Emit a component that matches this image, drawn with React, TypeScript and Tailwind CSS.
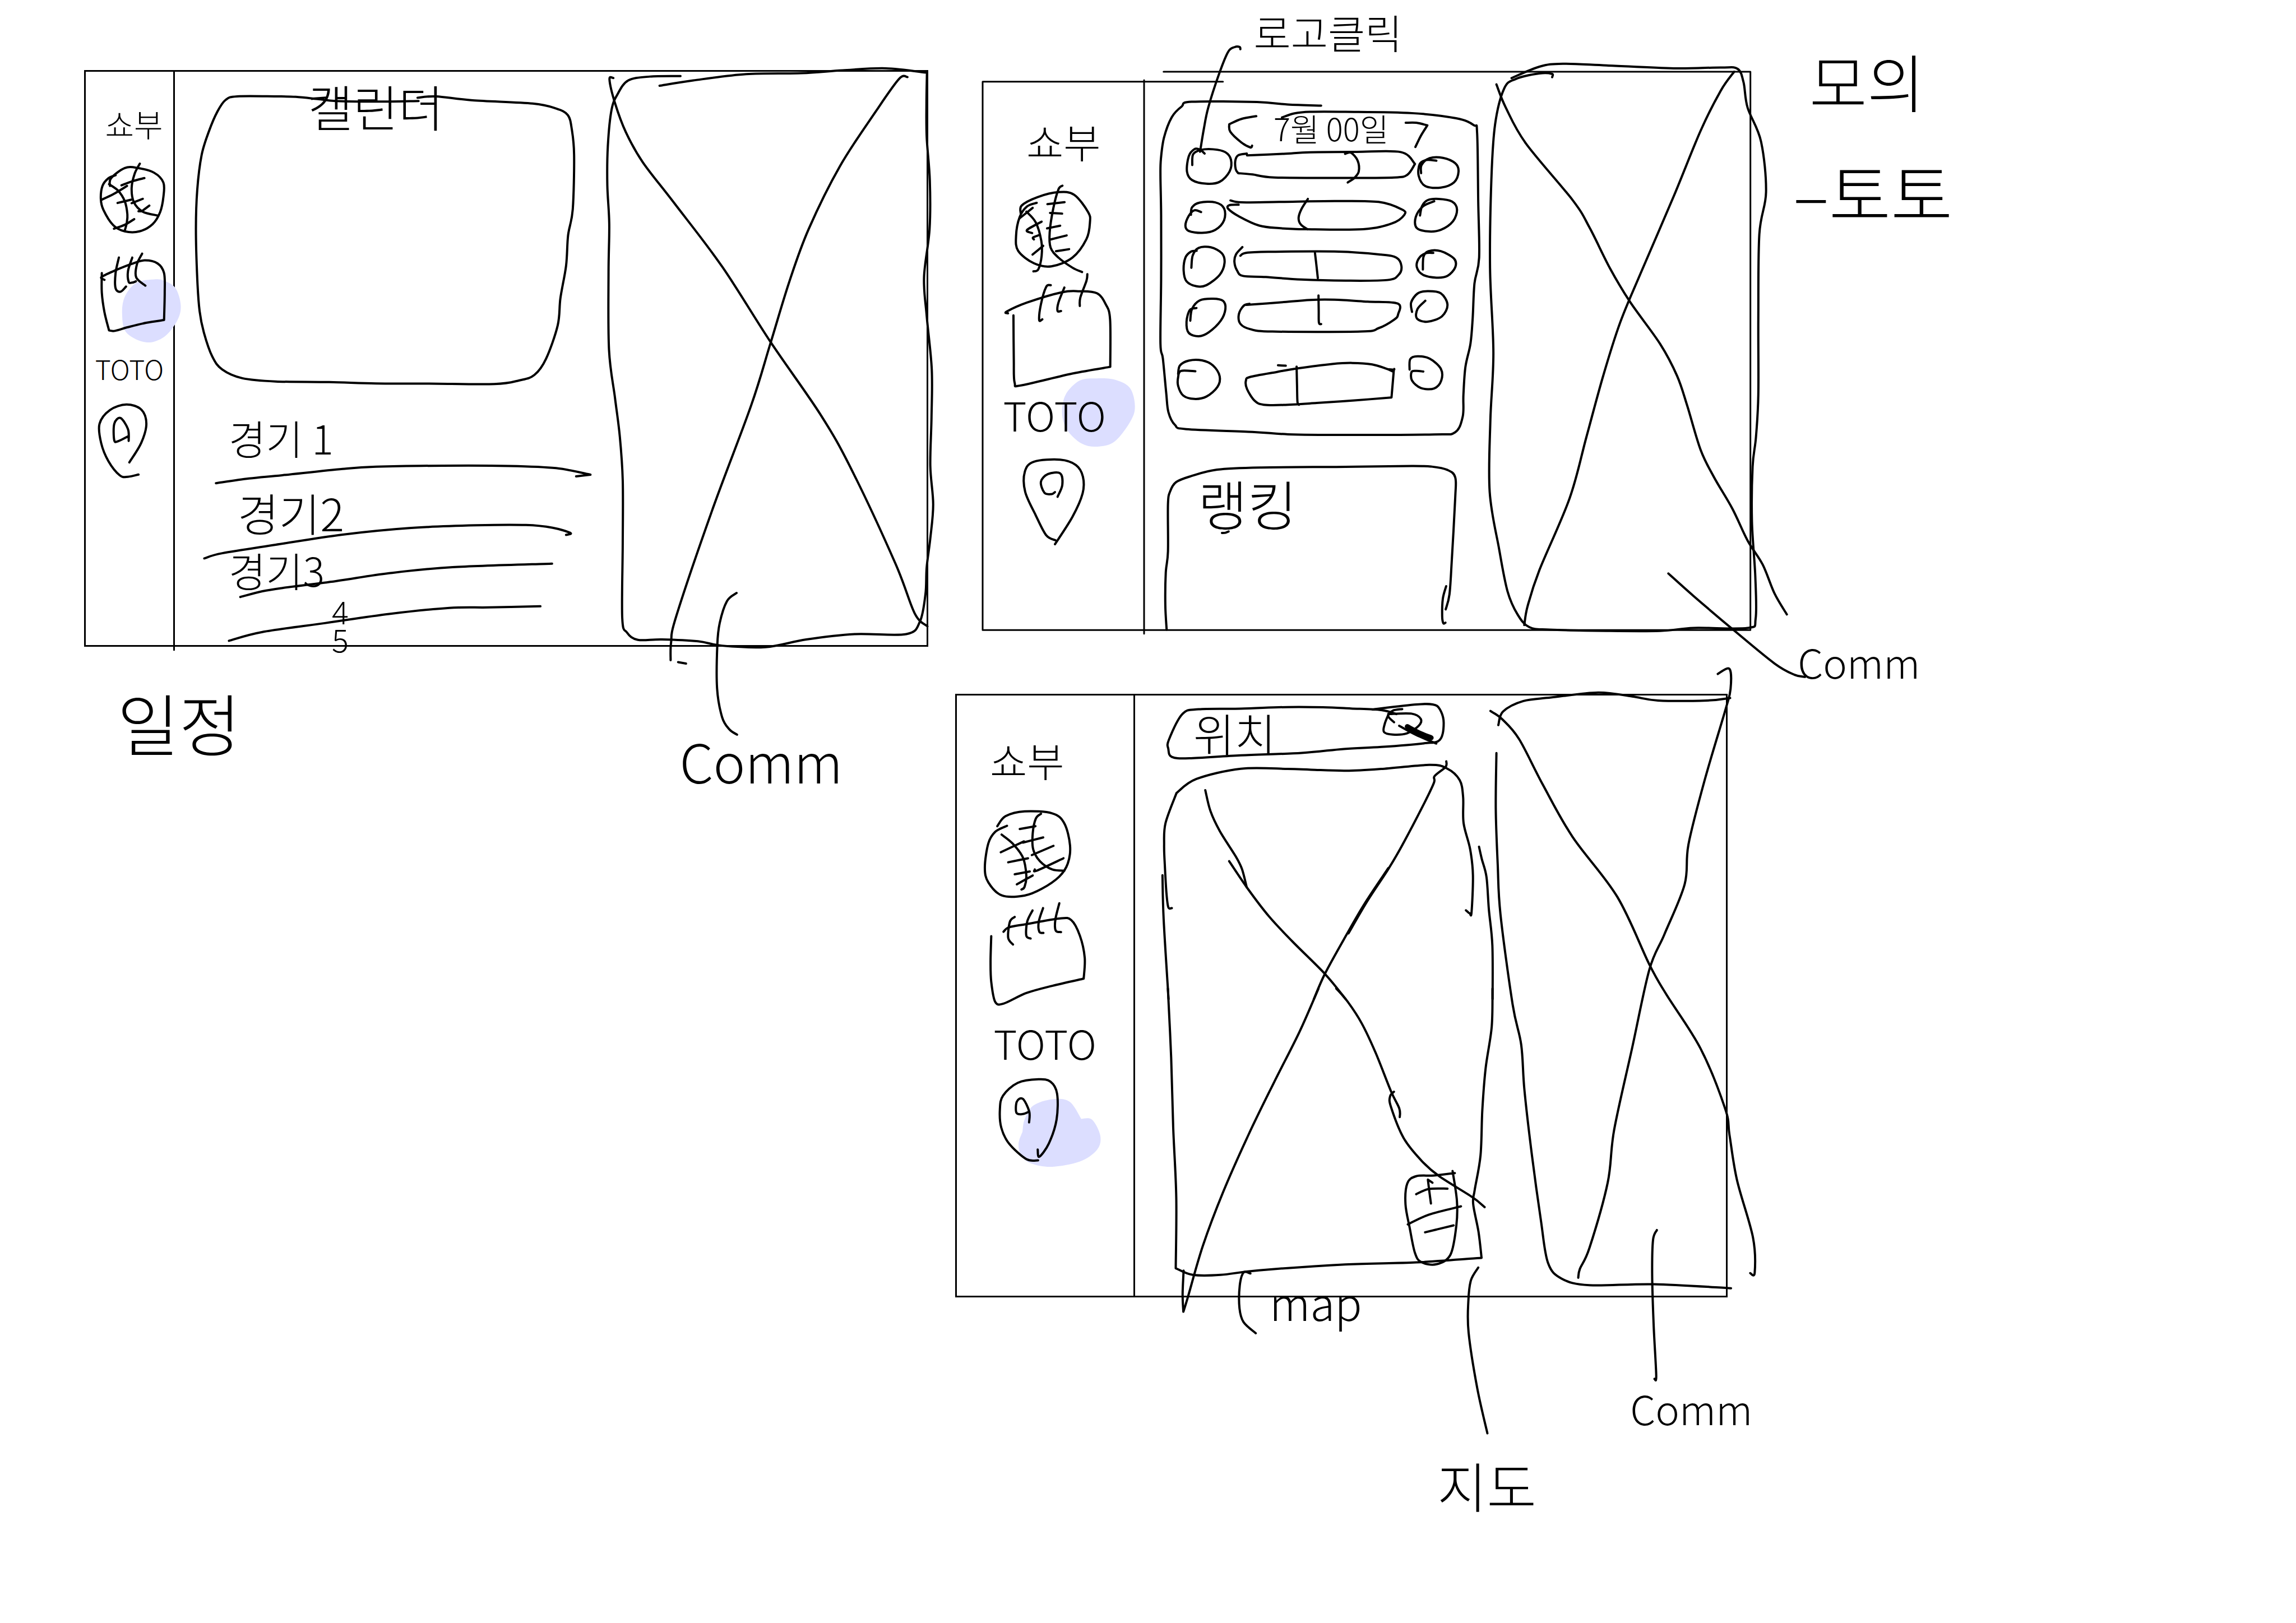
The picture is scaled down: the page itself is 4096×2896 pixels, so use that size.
import type { ReactNode } from 'react';

/* Turns a list of "x,y" points into a smooth pen stroke; a repeated point makes a corner. */
function pen(points: string, closed = false): string {
  const p = points.trim().split(/\s+/).map((s) => s.split(',').map(Number));
  const n = p.length;
  const at = (i: number) => (closed ? p[(i + n) % n] : p[Math.max(0, Math.min(n - 1, i))]);
  let d = `M${p[0][0]} ${p[0][1]}`;
  for (let i = 0; i < (closed ? n : n - 1); i++) {
    const [a, b, c, e] = [at(i - 1), at(i), at(i + 1), at(i + 2)];
    if (b[0] === c[0] && b[1] === c[1]) continue;
    d += `C${b[0] + (c[0] - a[0]) / 6} ${b[1] + (c[1] - a[1]) / 6} ${c[0] - (e[0] - b[0]) / 6} ${c[1] - (e[1] - b[1]) / 6} ${c[0]} ${c[1]}`;
  }
  return d;
}

type InkProps = { box: string; strokes?: string[]; blob?: string; bold?: string; width?: number };

/* Pen drawing that fills its parent; strokes may run past the edges. */
function Ink({ box, strokes = [], blob, bold, width = 4 }: InkProps) {
  return (
    <svg
      className="pointer-events-none absolute inset-0 h-full w-full overflow-visible"
      viewBox={box}
      preserveAspectRatio="none"
      fill="none"
      stroke="black"
      strokeLinecap="round"
      strokeLinejoin="round"
      strokeWidth={width}
      aria-hidden="true"
    >
      {blob && <path d={pen(blob, true)} fill="#dcdeff" stroke="none" />}
      {strokes.map((s) => (
        <path key={s} d={pen(s)} vectorEffect="non-scaling-stroke" />
      ))}
      {bold && <path d={pen(bold)} strokeWidth={9} vectorEffect="non-scaling-stroke" />}
    </svg>
  );
}

function NavButton({ label, size, children }: { label: string; size: string; children: ReactNode }) {
  return (
    <button type="button" aria-label={label} className={`relative flex w-full shrink-0 items-center justify-center leading-none ${size}`}>
      {children}
    </button>
  );
}

function Community({ size, ink }: { size: string; ink: InkProps }) {
  return (
    <aside aria-label="Comm" className={`relative h-full ${size}`}>
      <Ink {...ink} />
    </aside>
  );
}

/* ---------- 일정 ---------- */

const games = [
  { name: '경기 1', row: 'h-[30%] pl-24 text-[72px]' },
  { name: '경기2', row: 'h-[31%] pl-28 text-[80px]' },
  { name: '경기3', row: 'h-[16%] pl-24 text-[72px]' },
  { name: '4', row: 'h-[18%] pl-70 text-[56px]' },
  { name: '5', row: 'h-[5%] pl-70 text-[56px]' },
];

function ScheduleFrame() {
  return (
    <section aria-label="일정" className="absolute left-[3.66%] top-[4.31%] flex h-[35.54%] w-[36.78%] border-3 border-black">
      <nav className="flex h-[101%] w-[10.6%] flex-col border-r-3 border-black">
        <a href="#home" className="flex h-[15.2%] items-center justify-center pt-7 pl-4 text-[56px] leading-none">쇼부</a>
        <NavButton label="경기" size="h-[14.1%]">
          <Ink
            box="31 470 267 374"
            strokes={[
              '105,590 108,555 150,508 190,508 240,530 268,575 268,640 258,710 235,765 195,798 150,798 115,770 85,700 77,650 82,590 100,555 122,541',
              '102,582 130,612 150,660 158,720 156,760 150,795',
              '196,488 180,535 171,600 178,665 205,708 252,726',
              '140,587 175,568 210,554',
              '78,654 115,628 157,590',
              '128,668 170,653',
              '171,669 205,649',
              '192,706 203,704 225,680',
              '117,786 150,768 179,742',
            ]}
          />
        </NavButton>
        <NavButton label="일정" size="h-[17.1%]">
          <Ink
            box="31 844 267 458"
            blob="240,1019 185,1035 150,1100 142,1180 155,1265 215,1310 270,1285 310,1210 321,1140 305,1060 270,1025"
            strokes={[
              '88,1021 79,1008 120,978 170,948 210,931 250,945 270,990 272,1080 270,1207 270,1207 215,1220 160,1240 120,1257 102,1255 102,1255 88,1170 80,1080 80,990',
              '132,918 122,990 122,1060 137,1076 154,1052',
              '173,918 160,980 162,1030 172,1034 184,1028',
              '203,900 187,950 185,1010 213,1048',
            ]}
          />
        </NavButton>
        <NavButton label="TOTO" size="h-[9.6%] text-[48px]">TOTO</NavButton>
        <NavButton label="위치" size="h-[15%]">
          <Ink
            box="31 210 267 315"
            strokes={[
              '192,494 160,502 135,497 100,445 78,380 73,310 105,260 155,240 200,258 216,310 200,380 164,450',
              '162,372 160,330 137,289 118,310 118,370 130,373 161,355',
            ]}
          />
        </NavButton>
      </nav>
      <main className="flex h-full w-[50.4%] flex-col">
        <div className="relative h-[56.2%] pt-4 pr-10">
          <Ink
            box="298 55 1270 1488"
            strokes={[
              '1028,190 900,193 780,190 730,182 660,171 600,169 485,169 450,185 425,240 400,330 378,440 365,600 361,780 365,1010 372,1160 385,1260 410,1370 440,1430 500,1470 600,1485 760,1488 900,1494 1060,1495 1255,1497 1330,1480 1375,1455 1410,1380 1445,1225 1453,1100 1470,950 1476,810 1490,690 1494,440 1487,320 1475,255 1440,225 1370,202 1190,187 1080,169 1025,175',
            ]}
          />
          <h2 className="text-center text-[88px] leading-none">캘린더</h2>
        </div>
        <ol className="relative flex h-[43.8%] flex-col pt-3">
          <Ink
            box="298 191 1270 918"
            strokes={[
              '421,517 520,500 620,488 800,465 900,457 1100,453 1300,454 1440,462 1543,486 1543,486 1500,492',
              '386,792 440,773 600,742 800,705 1000,681 1200,671 1350,670 1430,680 1483,699 1470,706',
              '494,933 560,912 620,900 780,875 940,846 1130,824 1428,811',
              '460,1093 560,1061 750,1028 940,995 1120,973 1240,971 1393,967',
            ]}
          />
          {games.map((g) => (
            <li key={g.name} className={`flex shrink-0 items-center leading-none ${g.row}`}>{g.name}</li>
          ))}
        </ol>
      </main>
      <Community
        size="w-[39%]"
        ink={{
          box: '87 25 1363 1186',
          strokes: [
            '427,34 300,35 210,43 165,72 140,105 125,180 123,260 131,340 128,440 130,600 155,700 175,780 187,870 187,1000 185,1155 205,1185 250,1200 350,1199 500,1203 600,1212 780,1215 950,1199 1150,1188 1365,1188 1422,1162 1445,1105 1450,1050 1465,990 1477,920 1465,840 1470,740 1471,640 1450,530 1439,450 1462,350 1463,250 1450,160 1449,90 1451,30',
            '340,54 480,43 700,30 930,28 1100,22 1280,18 1451,27',
            '148,38 132,41 155,90 200,150 270,212 400,296 600,428 800,583 1010,735 1140,850 1320,1042 1400,1145 1453,1172',
            '1370,36 1335,40 1240,106 1090,220 960,350 880,458 800,588 720,716 560,930 410,1150 388,1205 386,1242',
            '417,1246 450,1249',
            '660,1103 620,1120 590,1165 580,1210 579,1300 600,1360 630,1385 662,1396',
          ],
        }}
      />
    </section>
  );
}

/* ---------- 모의 토토 ---------- */

const matches = [
  {
    row: 'h-[13.2%]',
    y: '670',
    h: '230',
    home: ['206,770 210,720 245,700 300,697 355,710 381,745 375,800 330,848 270,857 205,840 182,800 190,730 215,697 240,698 262,717'],
    odds: [
      '454,717 415,725 402,750 404,790 415,808 415,808 480,814 580,828 900,830 1120,828 1180,815 1214,765 1214,765 1150,710 950,709 740,711 620,718 455,725',
      '898,718 925,713 955,750 960,800 940,830 910,851',
    ],
    away: ['1241,808 1243,770 1280,738 1340,737 1395,762 1410,800 1390,850 1330,875 1260,868 1230,820 1235,765 1265,747 1310,750'],
  },
  {
    row: 'h-[12.6%]',
    y: '900',
    h: '220',
    home: ['200,1000 205,965 240,943 310,942 350,970 350,1025 310,1070 250,1084 190,1075 175,1050 190,1005 215,979 246,987'],
    odds: [
      '417,953 375,955 370,972 420,1008 510,1050 600,1062 720,1067 980,1067 1110,1040 1166,1000 1155,975 1050,940 850,936 600,940 430,942 380,933',
      '730,926 700,975 688,1015 698,1045 728,1067',
    ],
    away: ['1236,1003 1245,960 1270,932 1320,926 1380,938 1403,975 1385,1030 1330,1070 1270,1077 1220,1060 1217,1010 1250,960 1300,937'],
  },
  {
    row: 'h-[12.9%]',
    y: '1120',
    h: '225',
    home: ['202,1247 208,1190 235,1155 290,1152 340,1180 352,1225 330,1280 270,1328 225,1333 180,1310 167,1260 175,1200 200,1172 226,1168'],
    odds: [
      '434,1151 405,1185 398,1220 410,1260 437,1285 540,1290 700,1302 900,1307 1090,1304 1140,1280 1153,1240 1130,1200 1060,1186 870,1172 550,1173 450,1178 425,1191',
      '762,1178 768,1230 775,1295',
    ],
    away: ['1249,1255 1252,1195 1275,1170 1330,1170 1390,1205 1395,1245 1360,1285 1310,1293 1250,1280 1222,1245 1230,1205 1260,1180 1296,1178'],
  },
  {
    row: 'h-[14.8%]',
    y: '1345',
    h: '260',
    home: ['197,1495 205,1440 240,1400 300,1392 345,1402 356,1440 335,1495 280,1550 235,1568 190,1552 180,1500 195,1445 225,1436'],
    odds: [
      '466,1416 440,1425 418,1465 425,1510 470,1535 570,1546 970,1546 1050,1530 1120,1490 1138,1465 1136,1415 1000,1406 850,1397 740,1398 600,1410 452,1421',
      '778,1377 779,1450 780,1505 790,1511',
    ],
    away: ['1200,1454 1196,1410 1225,1368 1270,1357 1330,1367 1360,1420 1335,1475 1270,1500 1222,1485 1225,1440 1260,1402'],
  },
  {
    row: 'h-[18.9%]',
    y: '135',
    h: '331',
    home: ['220,262 155,260 142,290 142,330 165,375 215,391 270,380 320,335 330,285 300,235 250,211 190,212 150,235 142,275'],
    odds: [
      '1112,262 1085,250 1020,230 930,223 840,228 680,249 590,265 470,288 450,305 455,345 490,400 530,418 620,419 770,410 940,398 1108,384 1108,384 1118,262 1118,255 1090,252',
      '679,240 681,330 683,405 690,418',
      '595,234 630,236',
    ],
    away: ['1189,254 1192,205 1225,192 1280,203 1330,250 1332,305 1300,342 1240,340 1200,305 1198,265 1220,260 1251,263'],
  },
];

function TotoFrame() {
  return (
    <section aria-label="모의 토토" className="absolute left-[42.81%] top-[4.41%] flex h-[34.4%] w-[33.44%]">
      <Ink
        width={3}
        box="1869 136 1460 1062"
        strokes={[
          '2326,155 1869,155 1869,155 1869,1198 1869,1198 3329,1198 3329,1198 3329,136 3329,136 2213,136',
          '2176,152 2176,1205',
        ]}
      />
      <nav className="flex h-full w-[21%] flex-col">
        <a href="#home" className="flex h-[19.9%] items-center justify-center pt-14 pb-2 text-[72px] leading-none">쇼부</a>
        <NavButton label="경기" size="h-[16.3%]">
          <Ink
            box="87 372 921 271"
            strokes={[
              '305,465 310,440 400,415 520,400 610,408 690,460 700,490 680,540 600,595 480,621 380,612 290,575 278,530 298,475 340,443 396,432',
              '298,478 373,447',
              '337,458 390,490 422,545 424,590 405,630 377,636',
              '543,381 520,392 490,450 470,520 475,565 520,595 600,625 655,638',
              '457,436 555,430',
              '472,462 541,464',
              '455,508 530,500',
              '476,541 567,529',
              '506,576 581,570',
              '424,488 340,513 370,522',
              '410,528 375,535 380,541',
              '433,560 372,586',
            ]}
          />
        </NavButton>
        <NavButton label="일정" size="h-[20.5%]">
          <Ink
            box="87 643 921 342"
            strokes={[
              '232,762 224,757 340,730 540,699 640,696 740,702 790,735 815,780 816,922 816,922 600,942 310,977 270,970 265,900 263,768',
              '476,678 450,683 420,735 410,782 428,780',
              '554,685 520,730 515,755 535,755',
              '685,645 680,665 645,715 642,740',
            ]}
          />
        </NavButton>
        <NavButton label="TOTO" size="h-[10.5%] text-[72px]">
          <Ink
            box="87 985 921 176"
            blob="740,955 640,962 560,1005 541,1062 570,1110 650,1150 740,1160 840,1145 930,1085 957,1040 930,985 850,960"
          />
          <span className="relative pr-8 pb-3">TOTO</span>
        </NavButton>
        <NavButton label="위치" size="h-[18.8%]">
          <Ink
            box="87 1160 921 314"
            strokes={[
              '503,1440 450,1425 390,1365 330,1295 328,1235 380,1205 530,1199 620,1215 660,1250 658,1300 600,1370 500,1452',
              '515,1310 542,1275 530,1240 460,1242 420,1265 440,1298 480,1302 500,1296',
            ]}
          />
        </NavButton>
      </nav>
      <main className="flex h-full w-[44.1%] flex-col">
        <div className="relative flex h-[67.2%] flex-col">
          <Ink
            box="-10 333 1530 1749"
            strokes={[
              '790,491 640,486 500,474 205,473 160,495 115,545 80,640 66,740 64,820 67,1000 67,1300 64,1600 75,1670 90,1830 100,1920 130,1980 180,1999 480,2012 640,2023 900,2026 1300,2024 1395,2014 1430,1940 1433,1840 1442,1710 1465,1600 1475,1480 1483,1320 1504,1200 1500,940 1495,620 1480,582 1400,550 1200,526 900,520 740,520 670,527 613,546',
              '425,228 422,218 400,218 370,240 330,340 280,500 260,600 243,706',
            ]}
          />
          <header className="flex h-[19.2%] shrink-0 items-end pl-[23.5%]">
            <button type="button" aria-label="이전" className="relative h-[60%] w-[13.7%]">
              <Ink box="350 468 160 202" strokes={['478,680 470,688 430,665 380,615 375,580 375,580 430,555 497,542']} />
            </button>
            <h2 className="flex h-[60%] w-[55.5%] items-center justify-center pt-5 text-[56px] leading-none whitespace-nowrap">7월 00일</h2>
            <button type="button" aria-label="다음" className="relative h-[60%] w-[11.1%]">
              <Ink box="1160 468 130 202" strokes={['1172,573 1220,573 1270,585 1270,585 1240,635 1216,686']} />
            </button>
          </header>
          {matches.map((m) => (
            <div key={m.row} className={`flex shrink-0 ${m.row}`}>
              <span className="w-[9.2%]" />
              <button type="button" aria-label="로고" className="relative w-[17.3%]">
                <Ink box={`130 ${m.y} 265 ${m.h}`} strokes={m.home} />
              </button>
              <div className="relative w-[52.6%]">
                <Ink box={`395 ${m.y} 805 ${m.h}`} strokes={m.odds} />
              </div>
              <button type="button" aria-label="로고" className="relative w-[14.4%]">
                <Ink box={`1200 ${m.y} 220 ${m.h}`} strokes={m.away} />
              </button>
            </div>
          ))}
        </div>
        <div className="relative h-[32.8%] pt-13 pl-24">
          <Ink
            box="-10 612 1530 853"
            strokes={[
              '92,1465 86,1350 88,1200 98,1100 98,880 108,820 135,777 200,750 320,719 520,709 900,706 1200,702 1290,705 1360,720 1396,755 1396,850 1380,1150 1370,1300 1353,1370',
              '1355,1262 1340,1320 1337,1400 1342,1434 1352,1432',
              '342,1014 358,1013 372,1007',
            ]}
          />
          <h2 className="text-[96px] leading-none">랭킹</h2>
        </div>
      </main>
      <Community
        size="w-[34.9%]"
        ink={{
          box: '31 95 798 1322',
          strokes: [
            '238,108 237,100 200,99 130,112 95,135 68,220 57,350 53,560 63,760 54,920 52,1090 80,1225 105,1325 135,1380 170,1410 230,1416 400,1419 560,1419 660,1412 820,1412 844,1390 843,1290 833,1160 835,1030 845,960 852,860 852,680 855,480 875,380 860,260 820,180 808,120 790,88 740,85 600,87 400,80 270,76 200,83 117,110',
            '72,125 100,180 160,265 300,400 350,465 410,560 470,640 560,740 610,815 640,885 680,990 720,1055 775,1130 820,1205 865,1262 900,1330 937,1380',
            '780,95 740,140 680,235 600,390 500,575 440,690 390,815 340,960 290,1105 200,1275 165,1360 155,1405',
            '584,1283 660,1337 780,1418 900,1496 960,1523 991,1528',
          ],
        }}
      />
    </section>
  );
}

/* ---------- 지도 ---------- */

function MapFrame() {
  return (
    <section aria-label="지도" className="absolute left-[41.59%] top-[42.76%] flex h-[37.19%] w-[33.65%] border-3 border-black">
      <nav className="flex h-full w-[23.2%] flex-col border-r-3 border-black">
        <a href="#home" className="flex h-[18.3%] items-center justify-center pt-8 pr-16 text-[72px] leading-none">쇼부</a>
        <NavButton label="경기" size="h-[15.7%]">
          <Ink
            box="48 300 1023 235"
            strokes={[
              '282,352 330,327 440,315 600,320 670,345 703,400 690,445 640,478 540,508 440,525 310,525 230,492 210,455 230,395 270,366 338,351',
              '307,373 370,395 430,430 450,475 440,503 422,510',
              '535,321 505,333 487,370 490,410 530,440 600,460 670,463',
              '412,359 503,352',
              '302,417 436,390',
              '430,393 548,380',
              '482,424 607,401',
              '345,442 460,432',
              '499,460 510,463 665,432',
              '383,472 470,465',
              '395,497 487,475',
            ]}
          />
        </NavButton>
        <NavButton label="일정" size="h-[18.3%]">
          <Ink
            box="48 536 1023 274"
            strokes={[
              '318,615 350,604 450,596 640,582 710,586 760,625 788,680 782,732 782,732 600,750 450,768 320,794 270,790 247,740 243,690 247,626',
              '383,578 355,590 345,630 373,647',
              '486,562 455,590 450,625 475,632',
              '547,556 522,590 525,615 549,618',
              '641,544 618,585 620,612 651,616',
            ]}
          />
        </NavButton>
        <NavButton label="TOTO" size="h-[10.9%] text-[72px]">TOTO</NavButton>
        <NavButton label="위치" size="h-[16.1%]">
          <Ink
            box="48 973 1023 242"
            blob="428,1115 440,1085 490,1050 600,1034 700,1040 768,1083 768,1083 830,1085 878,1125 860,1160 760,1190 600,1203 480,1195 420,1175 405,1145 428,1115"
            strokes={[
              '516,1160 525,1178 580,1145 625,1085 628,1020 590,990 520,984 400,993 315,1025 297,1060 305,1105 350,1145 450,1184 518,1187',
              '466,1092 467,1065 430,1033 395,1040 393,1068 430,1071 466,1065',
            ]}
          />
        </NavButton>
      </nav>
      <main className="flex h-full w-[45.5%] flex-col">
        <form className="relative flex h-[11.3%]">
          <Ink
            box="-52 52 1496 340"
            strokes={[
              '1065,145 1000,125 870,117 750,111 600,110 400,118 220,121 150,145 92,275 90,320 105,360 180,367 400,352 660,340 840,320 1000,310 1180,292 1250,275 1267,190 1250,120 1220,97 1150,97 960,122',
            ]}
          />
          <input aria-label="위치" defaultValue="위치" className="relative w-[70.3%] bg-transparent pt-2 pl-26 text-[80px] leading-none outline-none" />
          <button type="button" aria-label="검색" className="relative w-[18%]">
            <Ink
              box="1000 52 270 340"
              bold="1112,208 1160,238 1214,264"
              strokes={[
                '1055,186 1030,155 1050,128 1090,120',
                '1030,145 1130,143 1170,170 1160,205 1110,242 1050,248 1012,235 1015,195 1030,150',
                '1077,204 1150,250 1236,293',
              ]}
            />
          </button>
        </form>
        <div className="relative h-[88.7%]">
          <Ink
            box="-52 392 1496 2655"
            strokes={[
              '105,1114 90,1110 82,1040 75,900 72,800 78,690 125,540 125,540 210,470 400,419 600,420 700,424 850,429 1000,420 1205,400 1280,417 1335,475 1350,560 1352,690 1380,820 1392,950 1386,1135 1378,1140 1362,1125',
              '65,950 70,1170 91,1568',
              '1418,808 1430,870 1450,960 1460,1120 1475,1300 1476,1568',
              '1278,382 1275,410 1228,456 1225,490 1180,600 1090,800 1030,920 940,1080 860,1240',
              '1030,915 930,1090 850,1250 760,1440 712,1568',
              '248,526 270,630 310,730 380,860 405,920 425,1010',
              '350,880 430,1018 520,1155 620,1280 760,1443 848,1568',
            ]}
          />
          <Ink
            box="-47 -648 1378 1532"
            strokes={[
              '82,0 95,200 103,400 115,600 113,805 113,805 180,824 290,824 440,811 780,794 1060,788 1317,775 1317,775 1305,700 1284,620 1290,580 1313,480 1320,350 1333,230 1357,110 1360,0',
              '675,0 600,125 500,270 400,420 300,585 220,740 160,890 143,930 143,930 140,880 144,812',
              '745,0 790,38 845,100 900,185 960,295 993,345 995,370',
              '972,297 957,310 960,340 1010,430 1080,495 1150,540 1280,600 1329,629',
              '407,820 380,817 365,855 364,920 380,960 428,992',
              '1304,803 1275,840 1265,900 1266,990 1300,1150 1340,1280',
            ]}
          />
          <div className="absolute left-[77.1%] top-[76.3%] flex h-[17.9%] w-[16%] flex-col">
            <Ink
              box="1015 520 220 275"
              strokes={[
                '1212,530 1130,537 1060,539 1025,560 1018,620 1035,690 1055,760 1080,787 1140,793 1195,765 1218,680 1220,610 1203,524',
                '1027,678 1110,650 1236,626',
              ]}
            />
            <button type="button" aria-label="확대" className="relative h-[49%]">
              <Ink box="1015 520 220 135" strokes={['1060,591 1110,576 1183,575', '1124,558 1106,549 1106,549 1112,585 1118,618']} />
            </button>
            <button type="button" aria-label="축소" className="relative h-[51%]">
              <Ink box="1015 655 220 140" strokes={['1095,700 1140,692 1207,680']} />
            </button>
          </div>
        </div>
      </main>
      <Community
        size="w-[31.3%]"
        ink={{
          box: '110 63 1127 1198',
          strokes: [
            '173,122 195,95 290,74 420,67 640,57 800,65 920,73 1150,73 1258,68',
            '164,178 161,290 170,400 183,500 240,680 280,760 295,850 330,980 372,1110 405,1195 470,1227 600,1240 900,1238 1262,1246',
            '136,94 190,110 270,150 380,240 520,345 730,465 880,600 960,660 1120,768 1235,888 1255,940 1290,1030 1365,1145 1373,1215 1352,1216',
            '1200,20 1255,10 1260,50 1237,90 1140,230 1063,360 1045,440 950,540 880,610 800,765 715,930 685,1035 600,1165 555,1207 547,1225',
            '915,1130 897,1150 893,1220 900,1320 912,1420 904,1427',
          ],
        }}
      />
    </section>
  );
}

/* ---------- notes around the frames ---------- */

const notes = [
  { text: '일정', at: 'left-[5.1%] top-[42.4%] text-[120px]' },
  { text: 'Comm', at: 'left-[29.6%] top-[45.2%] text-[96px]' },
  { text: '로고클릭', at: 'left-[54.6%] top-[0.7%] text-[72px]' },
  { text: '모의', at: 'left-[78.8%] top-[3%] text-[112px]' },
  { text: '–토토', at: 'left-[78.1%] top-[9.7%] text-[120px]' },
  { text: 'Comm', at: 'left-[78.3%] top-[39.5%] text-[72px]' },
  { text: 'map', at: 'left-[55.3%] top-[78.8%] text-[80px]' },
  { text: '지도', at: 'left-[62.6%] top-[89.8%] text-[96px]' },
  { text: 'Comm', at: 'left-[71%] top-[85.5%] text-[72px]' },
];

export default function App() {
  return (
    <div className="relative aspect-[4366/3087] w-full overflow-hidden bg-white font-['Noto_Sans_CJK_KR',sans-serif] font-light text-black">
      <ScheduleFrame />
      <TotoFrame />
      <MapFrame />
      {notes.map((n) => (
        <p key={n.at} className={`absolute leading-none whitespace-nowrap ${n.at}`}>{n.text}</p>
      ))}
    </div>
  );
}
